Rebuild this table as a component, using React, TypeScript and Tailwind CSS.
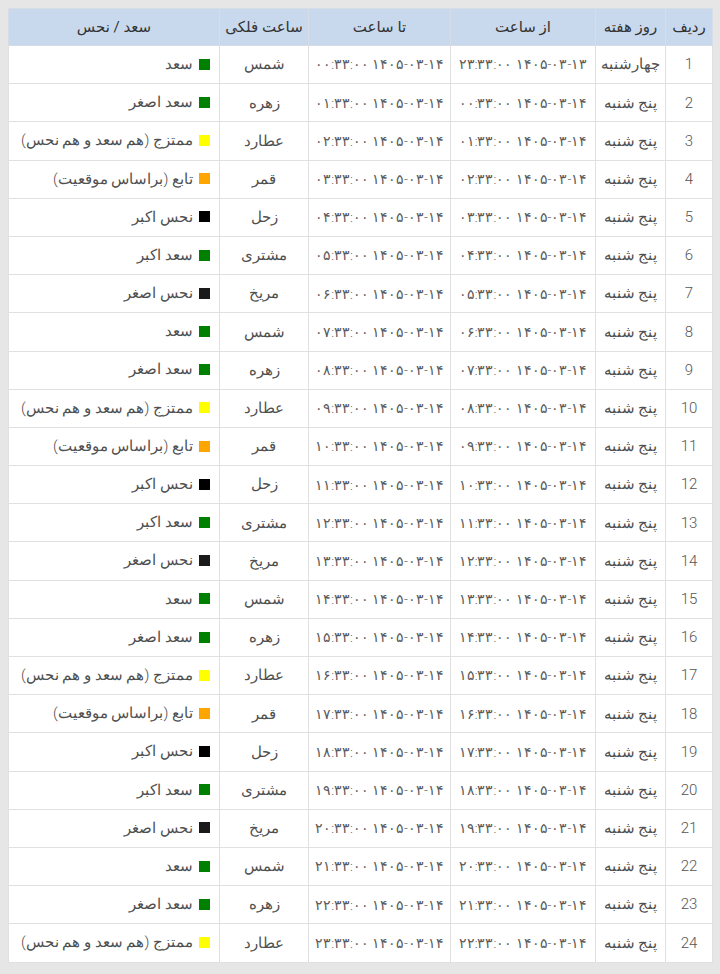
import React from "react";

const planets = ["شمس", "زهره", "عطارد", "قمر", "زحل", "مشتری", "مریخ"];
const status: { label: string; color: string }[] = [
  { label: "سعد", color: "bg-[#008000]" },
  { label: "سعد اصغر", color: "bg-[#008000]" },
  { label: "ممتزج (هم سعد و هم نحس)", color: "bg-[#ffff00]" },
  { label: "تابع (براساس موقعیت)", color: "bg-[#ffa500]" },
  { label: "نحس اکبر", color: "bg-[#000000]" },
  { label: "سعد اکبر", color: "bg-[#008000]" },
  { label: "نحس اصغر", color: "bg-[#1a1a1a]" },
];

const fa = (s: string) => s.replace(/[0-9]/g, (d) => "۰۱۲۳۴۵۶۷۸۹"[Number(d)]);
const pad = (n: number) => (n < 10 ? "0" + n : String(n));

const rows = Array.from({ length: 24 }, (_, k) => {
  const i = k + 1;
  const fromH = (i + 22) % 24;
  const toH = i - 1;
  const fromDate = i === 1 ? "1405-03-13" : "1405-03-14";
  return {
    n: i,
    day: i === 1 ? "چهارشنبه" : "پنج شنبه",
    from: fa(`${fromDate} ${pad(fromH)}:33:00`),
    to: fa(`1405-03-14 ${pad(toH)}:33:00`),
    planet: planets[k % 7],
    st: status[k % 7],
  };
});

export default function App() {
  return (
    <div
      className="min-h-[974px] w-[720px] bg-[#e6e6e6] pt-2 pl-2 pr-2"
      style={{ fontFamily: 'Roboto, "DejaVu Sans", sans-serif' }}
    >
      <table dir="rtl" className="w-[704px] table-fixed border-collapse bg-white text-[15px] font-light text-[#505050]">
        <colgroup>
          <col className="w-[47px]" />
          <col className="w-[70px]" />
          <col className="w-[145px]" />
          <col className="w-[142px]" />
          <col className="w-[89px]" />
          <col className="w-[211px]" />
        </colgroup>
        <thead>
          <tr className="h-[37px] bg-[#c9d9ed] text-[15px] text-[#333]">
            <th className="border border-[#d6dde6] font-normal">ردیف</th>
            <th className="border border-[#d6dde6] font-normal">روز هفته</th>
            <th className="border border-[#d6dde6] font-normal">از ساعت</th>
            <th className="border border-[#d6dde6] font-normal">تا ساعت</th>
            <th className="border border-[#d6dde6] font-normal">ساعت فلکی</th>
            <th className="border border-[#d6dde6] font-normal">سعد / نحس</th>
          </tr>
        </thead>
        <tbody>
          {rows.map((r) => (
            <tr key={r.n} className="h-[38.2px]">
              <td className="border border-[#e0e0e0] text-center text-[#555]">{r.n}</td>
              <td className="border border-[#e0e0e0] text-center">{r.day}</td>
              <td className="border border-[#e0e0e0] text-center text-[13.5px] text-[#5a5a5a]">{r.from}</td>
              <td className="border border-[#e0e0e0] text-center text-[13.5px] text-[#5a5a5a]">{r.to}</td>
              <td className="border border-[#e0e0e0] text-center">{r.planet}</td>
              <td className="border border-[#e0e0e0] pr-[9px]">
                <span className="inline-flex items-center gap-[6px]">
                  <span className={`inline-block h-[11px] w-[11px] ${r.st.color}`} />
                  <span>{r.st.label}</span>
                </span>
              </td>
            </tr>
          ))}
        </tbody>
      </table>
    </div>
  );
}
